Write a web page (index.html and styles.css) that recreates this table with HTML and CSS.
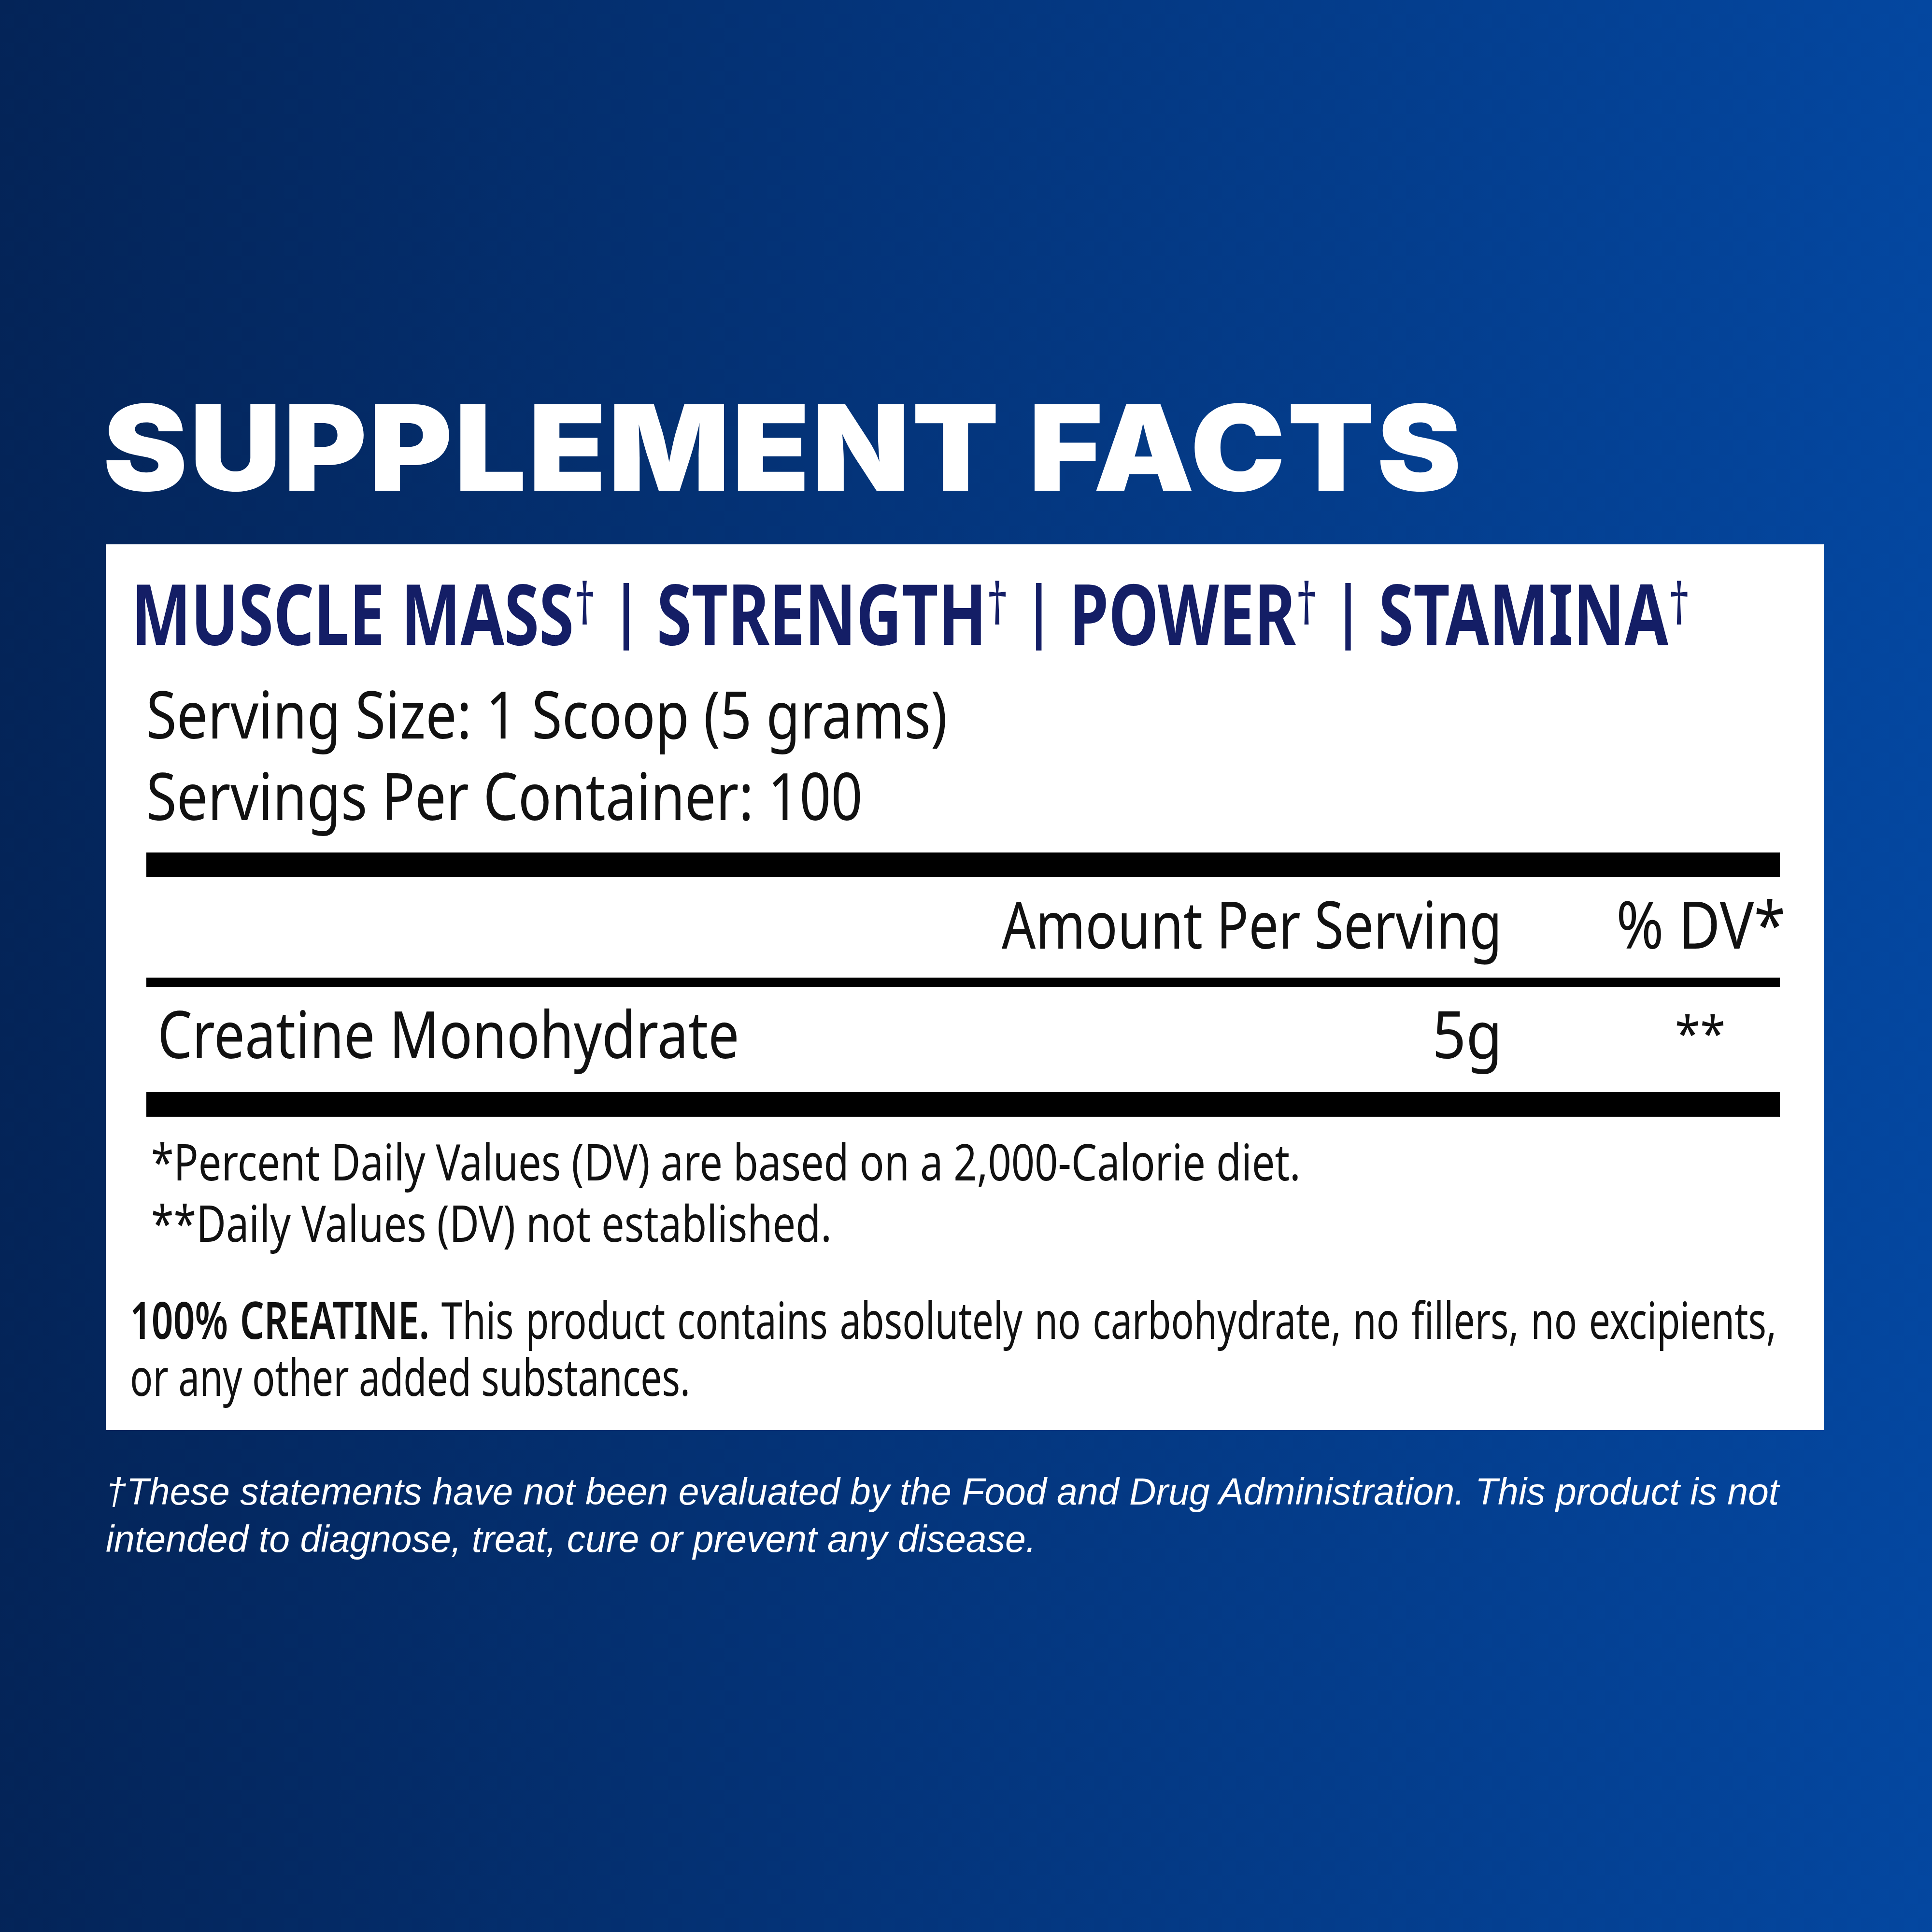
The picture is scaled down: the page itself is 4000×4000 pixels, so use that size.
FILE: index.html
```html
<!DOCTYPE html>
<html lang="en">
<head>
<meta charset="utf-8">
<title>Supplement Facts</title>
<link rel="stylesheet" href="styles.css">
</head>
<body>
<main class="page">
  <h1 class="title"><span class="fit">SUPPLEMENT FACTS</span></h1>
  <section class="panel">
    <h2 class="claims"><span class="fit">MUSCLE MASS<sup class="dag">†</sup> <span class="sep">|</span> STRENGTH<sup class="dag">†</sup> <span class="sep">|</span> POWER<sup class="dag">†</sup> <span class="sep">|</span> STAMINA<sup class="dag">†</sup></span></h2>
    <div class="serving">
      <p class="line"><span class="fit">Serving Size: 1 Scoop (5 grams)</span></p>
      <p class="line"><span class="fit">Servings Per Container: 100</span></p>
    </div>
    <div class="rule thick rule-top"></div>
    <div class="row row-head">
      <div class="cell name"></div>
      <div class="cell amt"><span class="fit">Amount Per Serving</span></div>
      <div class="cell dv"><span class="fit">% DV*</span></div>
    </div>
    <div class="rule thin"></div>
    <div class="row row-item">
      <div class="cell name"><span class="fit">Creatine Monohydrate</span></div>
      <div class="cell amt"><span class="fit fit-wide">5g</span></div>
      <div class="cell dv"><span class="fit stars">**</span></div>
    </div>
    <div class="rule thick"></div>
    <div class="notes">
      <p class="note"><span class="fit">*Percent Daily Values (DV) are based on a 2,000-Calorie diet.</span></p>
      <p class="note"><span class="fit">**Daily Values (DV) not established.</span></p>
    </div>
    <p class="desc"><b class="desc-lead">100% CREATINE.</b> This product contains absolutely no carbohydrate, no fillers, no excipients, or any other added substances.</p>
  </section>
  <p class="disclaimer">†These statements have not been evaluated by the Food and Drug Administration. This product is not intended to diagnose, treat, cure or prevent any disease.</p>
</main>
</body>
</html>
```

FILE: styles.css
```css
* { box-sizing: border-box; }
html, body { margin: 0; padding: 0; }
body { width: 4000px; height: 4000px; overflow: hidden; }

.page {
  width: 4000px;
  height: 4000px;
  overflow: hidden;
  padding: 804px 224px 0 219px;
  background: linear-gradient(90deg, #042458 0%, #04367e 50%, #0447a0 100%);
  font-family: "Noto Sans", "Open Sans", sans-serif;
}

.fit {
  display: inline-block;
  white-space: nowrap;
  transform-origin: left center;
}

/* Title */
.title {
  margin: 0 0 0 -6px;
  font-family: Inter, "DejaVu Sans", sans-serif;
  font-weight: 900;
  font-size: 246px;
  line-height: 246px;
  color: #ffffff;
  letter-spacing: 4px;
  white-space: nowrap;
}
.title .fit { transform: scaleX(1.07); }

/* White facts panel */
.panel {
  margin-top: 77px;
  width: 3557px;
  height: 1834px;
  background: #ffffff;
  padding: 45px 91px 0 84px;
}

.claims {
  margin: 0 0 0 -31px;
  font-weight: 700;
  font-size: 175px;
  line-height: 176px;
  color: #141e66;
  white-space: nowrap;
}
.claims .fit { transform: scaleX(0.747); }

.dag {
  font-size: 118px;
  font-weight: 400;
  line-height: 0;
  vertical-align: 42px;
}

.sep {
  font-size: 142px;
  vertical-align: 20px;
}

.serving { margin-top: 37px; }

.line {
  margin: 0;
  font-size: 136px;
  line-height: 169px;
  color: #111111;
  white-space: nowrap;
}
.line .fit { transform: scaleX(0.84); }

.rule { background: #000000; }
.rule.thick { height: 51px; }
.rule.thin { height: 20px; }
.rule-top { margin-top: 35px; }

.row {
  display: grid;
  grid-template-columns: 1fr auto 365px;
  font-size: 136px;
  line-height: 169px;
  color: #111111;
  white-space: nowrap;
}
.row-head { padding: 11px 0 28px; }
.row-item { padding: 10px 0 24px; }
.row .name { padding-left: 23px; }
.row .name .fit { transform: scaleX(0.838); }
.row .amt { text-align: right; padding-right: 210px; }
.row .amt .fit { transform-origin: right center; transform: scaleX(0.81); }
.row .amt .fit-wide { transform: scaleX(0.9); }
.row .dv { text-align: center; padding-right: 30px; }
.row .dv .fit { transform-origin: center center; transform: scaleX(0.87); }
.row .dv .stars {
  font-size: 100px;
  vertical-align: 28px;
  margin-left: 66px;
  transform: scaleX(0.95);
}

/* Footnotes */
.notes { margin-top: 28px; padding-left: 10px; }
.note {
  margin: 0;
  font-size: 104px;
  line-height: 127px;
  color: #111111;
  white-space: nowrap;
}
.note .fit { transform: scaleX(0.813); }

.desc {
  margin: 78px 0 0 -34px;
  width: 4610px;
  font-size: 106px;
  line-height: 118px;
  color: #111111;
  text-align: justify;
  transform: scaleX(0.7395);
  transform-origin: left top;
}
.desc-lead { font-weight: 600; }

/* FDA disclaimer */
.disclaimer {
  margin: 78px 0 0 0;
  width: 3500px;
  font-family: "Liberation Sans", Arial, sans-serif;
  font-style: italic;
  font-size: 77px;
  line-height: 98px;
  color: #ffffff;
}
```
